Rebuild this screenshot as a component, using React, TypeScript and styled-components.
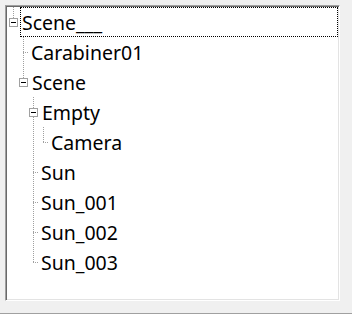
import React from "react";
import styled, { createGlobalStyle } from "styled-components";

const GlobalStyle = createGlobalStyle`
	html, body {
		margin: 0;
		padding: 0;
		background: #f0f0f0;
	}
`;

const INDENT = 10;
const DOTS_V = "repeating-linear-gradient(to bottom, #a0a0a0 0 1px, transparent 1px 2px)";
const DOTS_H = "repeating-linear-gradient(to right, #a0a0a0 0 1px, transparent 1px 2px)";

const Page = styled.div`
	box-sizing: border-box;
	width: 352px;
	height: 314px;
	padding: 5px 0 0 5px;
	border-bottom: 1px solid #a0a0a0;
	font-family: "Noto Sans", "Open Sans", sans-serif;
`;

const TreeBox = styled.div`
	box-sizing: border-box;
	width: 335px;
	height: 296px;
	padding: 1px;
	background: #fff;
	border: 1px solid;
	border-color: #a0a0a0 #fff #fff #a0a0a0;
	box-shadow: inset 1px 1px #696969, inset -1px -1px #e3e3e3;
	overflow: hidden;
`;

const Row = styled.div`
	display: flex;
	height: 30px;
`;

const Guide = styled.div<{ $line: boolean }>`
	flex: 0 0 ${INDENT}px;
	height: 30px;
	background: ${p => (p.$line ? DOTS_V : "none")} no-repeat 6px 0 / 1px 30px;
`;

const Joint = styled.div<{ $root?: boolean; $last: boolean }>`
	position: relative;
	flex: 0 0 ${INDENT}px;
	height: 30px;
	display: flex;
	align-items: center;

	&::before {
		content: "";
		position: absolute;
		left: 6px;
		top: 0;
		width: 1px;
		height: ${p => (p.$last ? "15px" : "30px")};
		background: ${DOTS_V};
	}

	&::after {
		content: "";
		position: absolute;
		left: 6px;
		top: 15px;
		width: ${p => (p.$root ? "0" : "6px")};
		height: 1px;
		background: ${DOTS_H};
	}
`;

const ExpandBox = styled.div`
	position: relative;
	z-index: 1;
	box-sizing: border-box;
	flex: 0 0 9px;
	height: 9px;
	margin-left: 2px;
	border: 1px solid #a0a0a0;
	background: #fff;
	display: flex;
	align-items: center;
	justify-content: center;

	&::before {
		content: "";
		width: 5px;
		height: 1px;
		background: #000;
	}
`;

const Label = styled.div<{ $focused?: boolean }>`
	box-sizing: border-box;
	height: 30px;
	margin-left: 2px;
	padding: 1px 1px 0;
	font-size: 19.5px;
	line-height: 27px;
	color: #000;
	white-space: nowrap;
	border: 1px ${p => (p.$focused ? "dotted #000" : "solid transparent")};
	flex: ${p => (p.$focused ? "1" : "0 0 auto")};
`;

interface TreeNode {
	label: string;
	children?: TreeNode[];
}

const scene: TreeNode = {
	label: "Scene___",
	children: [
		{ label: "Carabiner01" },
		{
			label: "Scene",
			children: [
				{ label: "Empty", children: [{ label: "Camera" }] },
				{ label: "Sun" },
				{ label: "Sun_001" },
				{ label: "Sun_002" },
				{ label: "Sun_003" },
			],
		},
	],
};

interface FlatRow {
	node: TreeNode;
	guides: boolean[];
	last: boolean;
	depth: number;
}

// flatten the tree; guides[i] = does ancestor column i still have a line running down
const buildRows = (root: TreeNode) => {
	const rows: FlatRow[] = [{ node: root, guides: [], last: true, depth: 0 }];
	const walk = (node: TreeNode, guides: boolean[]) => {
		const kids = node.children || [];
		kids.forEach((child, i) => {
			const last = i === kids.length - 1;
			rows.push({ node: child, guides, last, depth: guides.length });
			walk(child, [...guides, !last]);
		});
	};
	walk(root, [false]);
	return rows;
};

const SceneTree = () => {
	const rows = buildRows(scene);
	return (
		<TreeBox>
			{rows.map((r, i) => (
				<Row key={i}>
					{r.guides.map((g, j) => (
						<Guide key={j} $line={g} />
					))}
					<Joint $root={r.depth === 0} $last={r.last}>
						{r.node.children && <ExpandBox />}
					</Joint>
					<Label $focused={i === 0}>{r.node.label}</Label>
				</Row>
			))}
		</TreeBox>
	);
};

const App = () => (
	<Page>
		<GlobalStyle />
		<SceneTree />
	</Page>
);

export default App;
